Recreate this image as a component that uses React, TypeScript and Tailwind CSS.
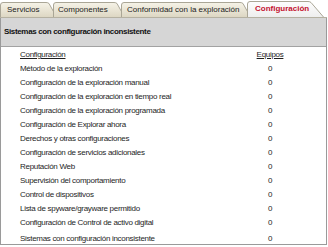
import React from "react";

const rows = [
  "Método de la exploración",
  "Configuración de la exploración manual",
  "Configuración de la exploración en tiempo real",
  "Configuración de la exploración programada",
  "Configuración de Explorar ahora",
  "Derechos y otras configuraciones",
  "Configuración de servicios adicionales",
  "Reputación Web",
  "Supervisión del comportamiento",
  "Control de dispositivos",
  "Lista de spyware/grayware permitido",
  "Configuración de Control de activo digital",
  "Sistemas con configuración inconsistente",
];

function Tab({
  label,
  width,
  pad,
  active,
}: {
  label: string;
  width: number;
  pad: number;
  active?: boolean;
}) {
  const h = active ? 16 : 15;
  const slant = active ? 14 : 9;
  const w = width;
  const id = `g${label.length}${active ? "a" : "i"}`;
  return (
    <div
      className={`relative shrink-0 ${active ? "h-[16px]" : "h-[15px] -mr-[4px]"}`}
      style={{ width: w }}
    >
      <svg className="absolute inset-0" width={w} height={h} viewBox={`0 0 ${w} ${h}`}>
        <defs>
          <linearGradient id={id} x1="0" y1="0" x2="0" y2="1">
            {active ? (
              <>
                <stop offset="0" stopColor="#fdfdfd" />
                <stop offset="1" stopColor="#eeeeee" />
              </>
            ) : (
              <>
                <stop offset="0" stopColor="#f6f3e8" />
                <stop offset="1" stopColor="#ddd7c3" />
              </>
            )}
          </linearGradient>
        </defs>
        <path
          d={`M0.5 ${h} L0.5 3 Q0.5 0.5 3 0.5 L${w - slant - 2} 0.5 Q${w - slant} 0.5 ${w - slant + 1} 1.5 L${w - 0.5} ${h}`}
          fill={`url(#${id})`}
          stroke="#aaa696"
          strokeWidth="1"
        />
      </svg>
      <span
        className={`relative flex h-full items-center whitespace-nowrap text-[8px] leading-none ${
          active ? "font-bold text-[#c41230]" : "text-[#222]"
        }`}
        style={{ paddingLeft: pad }}
      >
        {label}
      </span>
    </div>
  );
}

export default function App() {
  return (
    <div
      className="w-[328px] h-[247px] bg-white overflow-hidden"
      style={{ fontFamily: '"Liberation Sans", Arial, sans-serif' }}
    >
      <div className="flex items-end h-[18px] w-[327px] border-b border-[#b5b1a2]">
        <Tab label="Servicios" width={57} pad={7} />
        <Tab label="Componentes" width={72} pad={5} />
        <Tab label="Conformidad con la exploración" width={130} pad={6} />
        <Tab label="Configuración" width={77} pad={8} active />
      </div>
      <div className="w-[327px] h-[227px] border-x border-b border-[#9a9a9a] flex flex-col">
        <div className="h-[29px] shrink-0 bg-[#d6d6d6] border-b border-[#a2a2a2] flex items-center pl-[3px]">
          <span className="text-[8px] font-bold text-[#111] tracking-[-0.35px]">
            Sistemas con configuración inconsistente
          </span>
        </div>
        <div className="pt-[1px] text-[8px] text-[#1e1e1e] tracking-[-0.3px] leading-none">
          <div className="flex h-[14px] items-center">
            <span className="pl-[19px] w-[239px] underline">Configuración</span>
            <span className="w-[60px] text-center underline">Equipos</span>
          </div>
          {rows.map((r, i) => (
            <div
              key={i}
              className={`flex h-[14px] items-center ${i === rows.length - 1 ? "mt-[2px]" : ""}`}
            >
              <span className="pl-[19px] w-[239px] whitespace-nowrap">{r}</span>
              <span className="w-[60px] text-center">0</span>
            </div>
          ))}
        </div>
      </div>
    </div>
  );
}
